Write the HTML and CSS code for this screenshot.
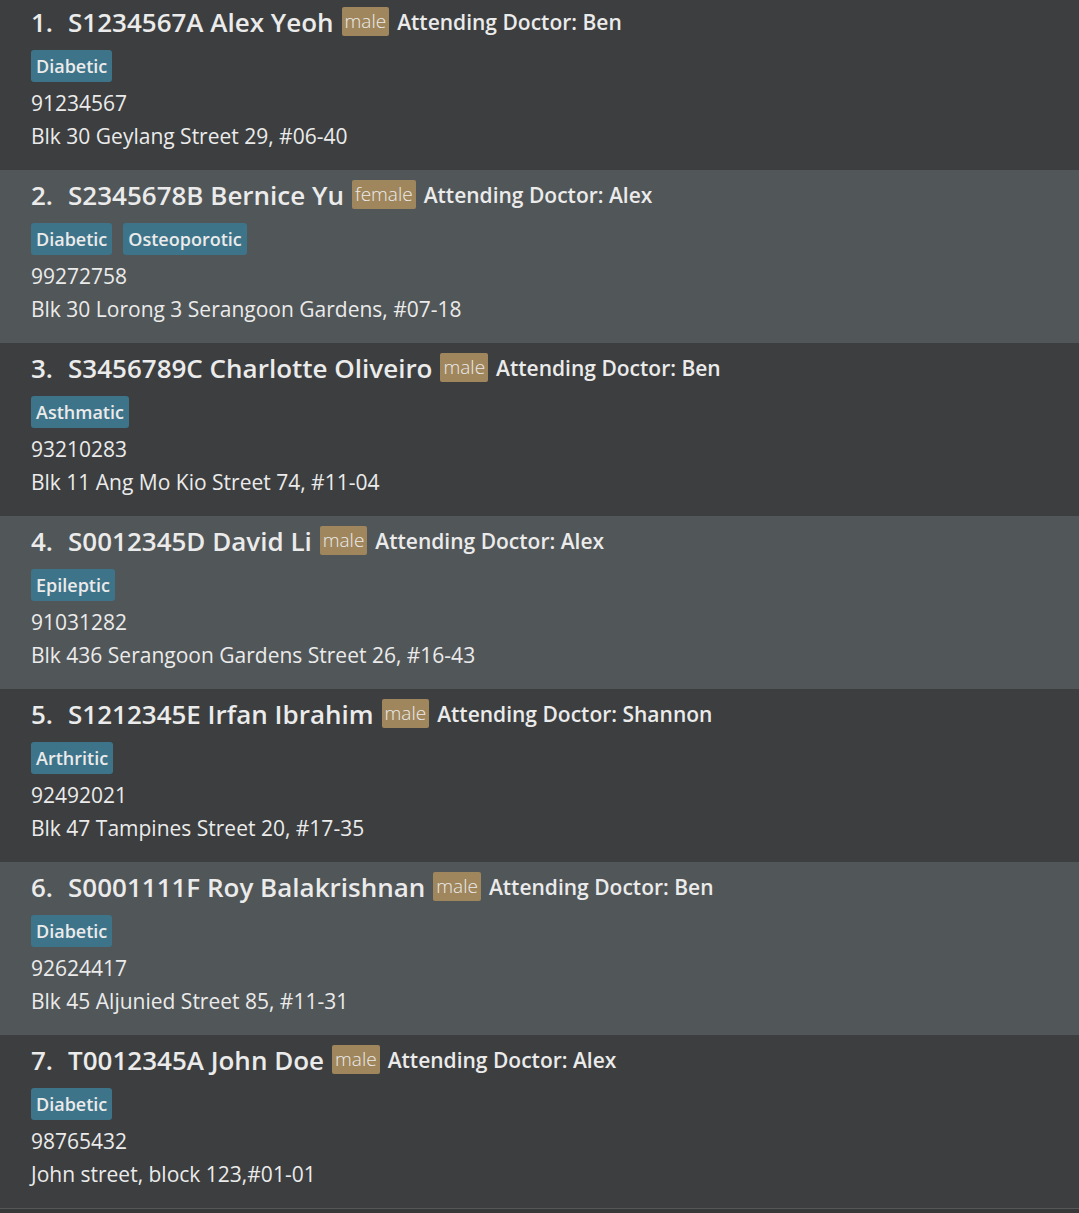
FILE: index.html
```html
<!DOCTYPE html>
<html lang="en">
<head>
<meta charset="utf-8">
<title>Patients</title>
<link rel="stylesheet" href="styles.css">
</head>
<body>
<ul class="patients">
<li class="patient">
<h2 class="heading"><span class="index">1.</span><span class="name">S1234567A Alex Yeoh</span><span class="sex">male</span><span class="doctor">Attending Doctor: Ben</span></h2>
<div class="tags"><span class="tag">Diabetic</span></div>
<p class="detail">91234567</p>
<p class="detail">Blk 30 Geylang Street 29, #06-40</p>
</li>
<li class="patient">
<h2 class="heading"><span class="index">2.</span><span class="name">S2345678B Bernice Yu</span><span class="sex">female</span><span class="doctor">Attending Doctor: Alex</span></h2>
<div class="tags"><span class="tag">Diabetic</span><span class="tag">Osteoporotic</span></div>
<p class="detail">99272758</p>
<p class="detail">Blk 30 Lorong 3 Serangoon Gardens, #07-18</p>
</li>
<li class="patient">
<h2 class="heading"><span class="index">3.</span><span class="name">S3456789C Charlotte Oliveiro</span><span class="sex">male</span><span class="doctor">Attending Doctor: Ben</span></h2>
<div class="tags"><span class="tag">Asthmatic</span></div>
<p class="detail">93210283</p>
<p class="detail">Blk 11 Ang Mo Kio Street 74, #11-04</p>
</li>
<li class="patient">
<h2 class="heading"><span class="index">4.</span><span class="name">S0012345D David Li</span><span class="sex">male</span><span class="doctor">Attending Doctor: Alex</span></h2>
<div class="tags"><span class="tag">Epileptic</span></div>
<p class="detail">91031282</p>
<p class="detail">Blk 436 Serangoon Gardens Street 26, #16-43</p>
</li>
<li class="patient">
<h2 class="heading"><span class="index">5.</span><span class="name">S1212345E Irfan Ibrahim</span><span class="sex">male</span><span class="doctor">Attending Doctor: Shannon</span></h2>
<div class="tags"><span class="tag">Arthritic</span></div>
<p class="detail">92492021</p>
<p class="detail">Blk 47 Tampines Street 20, #17-35</p>
</li>
<li class="patient">
<h2 class="heading"><span class="index">6.</span><span class="name">S0001111F Roy Balakrishnan</span><span class="sex">male</span><span class="doctor">Attending Doctor: Ben</span></h2>
<div class="tags"><span class="tag">Diabetic</span></div>
<p class="detail">92624417</p>
<p class="detail">Blk 45 Aljunied Street 85, #11-31</p>
</li>
<li class="patient">
<h2 class="heading"><span class="index">7.</span><span class="name">T0012345A John Doe</span><span class="sex">male</span><span class="doctor">Attending Doctor: Alex</span></h2>
<div class="tags"><span class="tag">Diabetic</span></div>
<p class="detail">98765432</p>
<p class="detail">John street, block 123,#01-01</p>
</li>
</ul>
</body>
</html>
```

FILE: styles.css
```css
* {
  box-sizing: border-box;
}

body {
  margin: 0;
  background: #383838;
  color: #ebebeb;
  font-family: "Segoe UI", "Open Sans", "Noto Sans", sans-serif;
}

.patients {
  margin: 0;
  padding: 0;
  list-style: none;
  border-bottom: 1px solid #555758;
}

.patient {
  padding: 4px 31px 17px;
  background: #3c3e3f;
}

.patient:first-child {
  padding-top: 1px;
}

.patient:nth-child(even) {
  background: #515658;
}

.heading {
  display: flex;
  align-items: center;
  gap: 8px;
  height: 41px;
  margin: 0;
  font-size: 26px;
  font-weight: 600;
  white-space: nowrap;
}

.index {
  min-width: 29px;
}

.sex {
  padding: 0 3px;
  border-radius: 2px;
  background: #a0865c;
  font-size: 19px;
  font-weight: 300;
  line-height: 29px;
}

.doctor {
  font-size: 21px;
}

.tags {
  display: flex;
  gap: 11px;
  margin: 8px 0 5px;
}

.tag {
  padding: 0 5px;
  border-radius: 3px;
  background: #3e7489;
  font-size: 18px;
  font-weight: 600;
  line-height: 32px;
}

.detail {
  margin: 0;
  font-size: 21px;
  line-height: 33px;
}
```
